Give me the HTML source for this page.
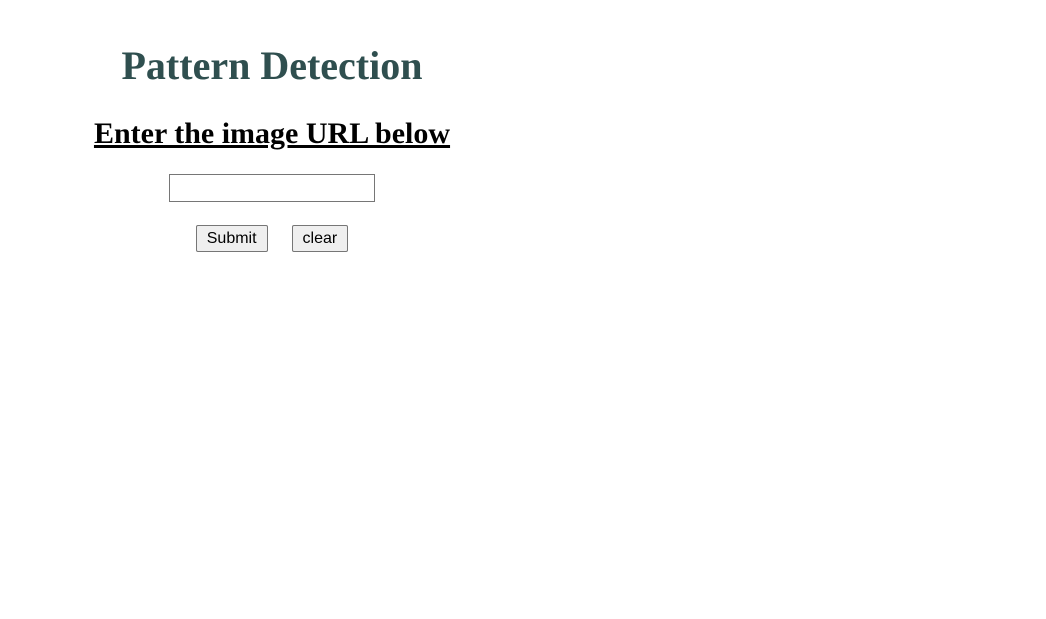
<!DOCTYPE html>
<html><head><style>
body{margin:0;background:#fff;width:1046px;height:619px;position:relative;overflow:hidden}
.c{position:absolute;left:0;width:544px;text-align:center}
h1{font:bold 40px "Liberation Serif",serif;color:#2f4f4f;margin:0}
h2{font:bold 30px "Liberation Serif",serif;color:#000;text-decoration:underline;margin:0}
input{width:206px;height:28px;border:1px solid #767676;box-sizing:border-box;padding:0}
button{font:16px "Liberation Sans",sans-serif;background:#efefef;border:1px solid #767676;border-radius:2px;height:27px;padding:0 10px;margin:0 12px}
</style></head><body>
<div class="c" style="top:42px"><h1>Pattern Detection</h1></div>
<div class="c" style="top:117px"><h2>Enter the image URL below</h2></div>
<div class="c" style="top:174px"><input type="text"></div>
<div class="c" style="top:225px"><button>Submit</button><button>clear</button></div>
</body></html>
